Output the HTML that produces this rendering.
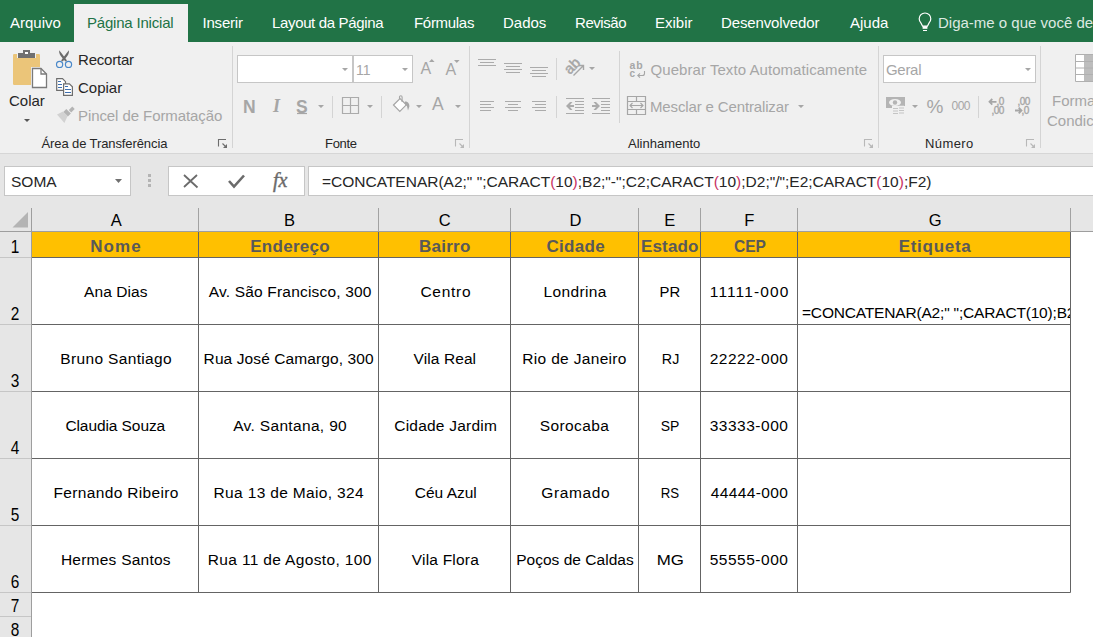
<!DOCTYPE html>
<html><head><meta charset="utf-8">
<style>
*{margin:0;padding:0;box-sizing:border-box}
html,body{width:1093px;height:637px;overflow:hidden;background:#fff;font-family:"Liberation Sans",sans-serif}
.a{position:absolute;white-space:nowrap}
#tabs{position:absolute;left:0;top:0;width:1093px;height:42px;background:#217346}
.tab{position:absolute;top:14px;font-size:15px;line-height:18px;color:#fff}
#rib{position:absolute;left:0;top:42px;width:1093px;height:112px;background:#f0f0f0;border-bottom:1px solid #d6d6d6}
.gl{position:absolute;top:136px;font-size:13px;line-height:16px;color:#262626}
.rt{position:absolute;font-size:15px;line-height:18px;color:#262626}
.dis{color:#a6a6a6}
#fb{position:absolute;left:0;top:154px;width:1093px;height:483px;background:#e6e6e6}
.box{position:absolute;background:#fff;border:1px solid #c6c6c6}
#ov{position:absolute;left:0;top:0}
.cl{position:absolute;font-size:15.5px;line-height:18px;color:#000;text-align:center;white-space:nowrap}
.hd{position:absolute;top:211px;padding-left:1px;font-size:16.5px;line-height:18px;color:#000;text-align:center}
.rn{position:absolute;left:0;width:30px;font-size:17.5px;transform:scaleX(0.88);line-height:18px;color:#000;text-align:center}
.bh{position:absolute;top:237.5px;font-size:17px;line-height:18px;color:#595959;font-weight:bold;text-align:center;white-space:nowrap}

</style></head><body>
<div id="tabs">
  <div class="a" style="left:74px;top:4px;width:114px;height:38px;background:#f0f0f0"></div>
  <div class="tab a" style="left:10px">Arquivo</div>
  <div class="tab a" style="left:87px;color:#217346;letter-spacing:-0.2px">Página Inicial</div>
  <div class="tab a" style="left:202.5px;letter-spacing:-0.2px">Inserir</div>
  <div class="tab a" style="left:272px;letter-spacing:-0.35px">Layout da Página</div>
  <div class="tab a" style="left:414px;letter-spacing:-0.3px">Fórmulas</div>
  <div class="tab a" style="left:503px">Dados</div>
  <div class="tab a" style="left:575px;letter-spacing:-0.45px">Revisão</div>
  <div class="tab a" style="left:655px">Exibir</div>
  <div class="tab a" style="left:721px;letter-spacing:-0.13px">Desenvolvedor</div>
  <div class="tab a" style="left:850px">Ajuda</div>
  <div class="tab a" style="left:938px;color:#dde9e1">Diga-me o que você deseja fazer</div>
</div>
<div id="rib"></div>
<!-- ribbon texts -->
<div class="rt a" style="left:9px;top:92px">Colar</div>
<div class="rt a" style="left:78px;top:51px;letter-spacing:-0.2px">Recortar</div>
<div class="rt a" style="left:78px;top:79px">Copiar</div>
<div class="rt a dis" style="left:78px;top:107px;letter-spacing:-0.08px">Pincel de Formatação</div>
<div class="gl a" style="left:41.5px;letter-spacing:-0.1px">Área de Transferência</div>
<div class="gl a" style="left:325px;letter-spacing:-0.3px">Fonte</div>
<div class="gl a" style="left:628px">Alinhamento</div>
<div class="gl a" style="left:925px;letter-spacing:0.4px">Número</div>
<div class="box" style="left:237px;top:55px;width:116px;height:28px"></div>
<div class="box" style="left:353px;top:55px;width:60px;height:28px"></div>
<div class="rt a dis" style="left:356px;top:61px;font-size:14px">11</div>
<div class="box" style="left:883px;top:55px;width:153px;height:28px"></div>
<div class="rt a dis" style="left:886px;top:61px;letter-spacing:-0.3px">Geral</div>
<div class="rt a dis" style="left:650.5px;top:61px;letter-spacing:0.06px">Quebrar Texto Automaticamente</div>
<div class="rt a dis" style="left:650px;top:97.5px;letter-spacing:-0.14px">Mesclar e Centralizar</div>
<div class="rt a dis" style="left:1052px;top:92px">Formatação</div>
<div class="rt a dis" style="left:1047px;top:112px">Condicional</div>
<div class="rt a dis" style="left:420.5px;top:60px;font-size:16px">A</div>
<div class="rt a dis" style="left:445.5px;top:61px;font-size:16px">A</div>
<div class="rt a dis" style="left:432px;top:94.5px;font-size:17.5px">A</div>
<div class="rt a dis" style="left:243px;top:97.5px;font-size:17.5px;font-weight:bold">N</div>
<div class="rt a dis" style="left:273px;top:97px;font-size:18px;font-style:italic;font-family:'Liberation Serif',serif;font-weight:bold">I</div>
<div class="rt a dis" style="left:296px;top:97.5px;font-size:17.5px;font-weight:bold">S</div>
<div class="rt a dis" style="left:926.5px;top:97.5px;font-size:19px">%</div>
<div class="rt a dis" style="left:951.5px;top:97px;font-size:12px;letter-spacing:-0.5px">000</div>

<div id="fb"></div>
<div class="box" style="left:4px;top:166px;width:127px;height:30px"></div>
<div class="rt a" style="left:11px;top:172.5px;color:#262626;font-size:15.5px">SOMA</div>
<div class="box" style="left:168px;top:166px;width:137px;height:30px"></div>
<div class="box" style="left:308px;top:166px;width:800px;height:30px"></div>
<div class="rt a" style="left:322px;top:172.5px;color:#262626;font-size:15.5px">=CONCATENAR(A2;" ";CARACT<span style="color:#c83264">(</span>10<span style="color:#c83264">)</span>;B2;"-";C2;CARACT<span style="color:#c83264">(</span>10<span style="color:#c83264">)</span>;D2;"/";E2;CARACT<span style="color:#c83264">(</span>10<span style="color:#c83264">)</span>;F2)</div>
<div class="a" style="left:32px;top:232px;width:1061px;height:405px;background:#fff"></div>
<div class="a" style="left:32px;top:232px;width:1038px;height:25px;background:#ffc000"></div>
<div class="hd a" style="left:31px;width:167px;letter-spacing:0.000px;text-indent:2.50px">A</div>
<div class="bh a" style="left:31px;width:167px;letter-spacing:1.100px;text-indent:3.00px">Nome</div>
<div class="hd a" style="left:198px;width:180px;letter-spacing:0.000px;text-indent:2.20px">B</div>
<div class="bh a" style="left:198px;width:180px;letter-spacing:0.300px;text-indent:4.20px">Endereço</div>
<div class="hd a" style="left:378px;width:132px;letter-spacing:0.000px;text-indent:0.60px">C</div>
<div class="bh a" style="left:378px;width:132px;letter-spacing:0.240px;text-indent:1.64px">Bairro</div>
<div class="hd a" style="left:510px;width:128px;letter-spacing:0.000px;text-indent:1.80px">D</div>
<div class="bh a" style="left:510px;width:128px;letter-spacing:0.320px;text-indent:3.52px">Cidade</div>
<div class="hd a" style="left:638px;width:62px;letter-spacing:0.000px;text-indent:0.40px">E</div>
<div class="bh a" style="left:638px;width:62px;letter-spacing:0.160px;text-indent:1.56px">Estado</div>
<div class="hd a" style="left:700px;width:97px;letter-spacing:0.000px;text-indent:0.80px">F</div>
<div class="bh a" style="left:700px;width:97px;transform:translateX(1.5px) scaleX(0.915)">CEP</div>
<div class="hd a" style="left:797px;width:273px;letter-spacing:0.000px;text-indent:2.20px">G</div>
<div class="bh a" style="left:797px;width:273px;letter-spacing:0.729px;text-indent:3.23px">Etiqueta</div>
<div class="cl a" style="left:32px;width:167px;top:282.5px;letter-spacing:0.086px;text-indent:0.69px">Ana Dias</div>
<div class="cl a" style="left:199px;width:180px;top:282.5px;letter-spacing:0.186px;text-indent:2.29px">Av. São Francisco, 300</div>
<div class="cl a" style="left:379px;width:132px;top:282.5px;letter-spacing:0.720px;text-indent:1.72px">Centro</div>
<div class="cl a" style="left:511px;width:128px;top:282.5px;letter-spacing:0.386px;text-indent:0.29px">Londrina</div>
<div class="cl a" style="left:639px;width:62px;top:282.5px;transform:translateX(-0.1px) scaleX(0.958)">PR</div>
<div class="cl a" style="left:701px;width:97px;top:282.5px;letter-spacing:1.125px;text-indent:0.33px">11111-000</div>
<div class="cl a" style="left:32px;width:167px;top:349.5px;letter-spacing:0.346px;text-indent:1.25px">Bruno Santiago</div>
<div class="cl a" style="left:199px;width:180px;top:349.5px;letter-spacing:0.100px;text-indent:-0.70px">Rua José Camargo, 300</div>
<div class="cl a" style="left:379px;width:132px;top:349.5px;letter-spacing:0.100px;text-indent:-0.30px">Vila Real</div>
<div class="cl a" style="left:511px;width:128px;top:349.5px;letter-spacing:0.323px;text-indent:-0.88px">Rio de Janeiro</div>
<div class="cl a" style="left:639px;width:62px;top:349.5px;transform:translateX(0.6px) scaleX(0.924)">RJ</div>
<div class="cl a" style="left:701px;width:97px;top:349.5px;letter-spacing:0.525px;text-indent:-0.88px">22222-000</div>
<div class="cl a" style="left:32px;width:167px;top:416.5px;letter-spacing:-0.083px;text-indent:-0.48px">Claudia Souza</div>
<div class="cl a" style="left:199px;width:180px;top:416.5px;letter-spacing:0.336px;text-indent:2.24px">Av. Santana, 90</div>
<div class="cl a" style="left:379px;width:132px;top:416.5px;letter-spacing:0.225px;text-indent:1.32px">Cidade Jardim</div>
<div class="cl a" style="left:511px;width:128px;top:416.5px;letter-spacing:0.386px;text-indent:-0.91px">Sorocaba</div>
<div class="cl a" style="left:639px;width:62px;top:416.5px;transform:scaleX(0.9)">SP</div>
<div class="cl a" style="left:701px;width:97px;top:416.5px;letter-spacing:0.525px;text-indent:-0.88px">33333-000</div>
<div class="cl a" style="left:32px;width:167px;top:483.5px;letter-spacing:0.340px;text-indent:1.24px">Fernando Ribeiro</div>
<div class="cl a" style="left:199px;width:180px;top:483.5px;letter-spacing:0.344px;text-indent:-0.46px">Rua 13 de Maio, 324</div>
<div class="cl a" style="left:379px;width:132px;top:483.5px;letter-spacing:0.000px;text-indent:1.60px">Céu Azul</div>
<div class="cl a" style="left:511px;width:128px;top:483.5px;letter-spacing:0.650px;text-indent:1.55px">Gramado</div>
<div class="cl a" style="left:639px;width:62px;top:483.5px;transform:scaleX(0.855)">RS</div>
<div class="cl a" style="left:701px;width:97px;top:483.5px;letter-spacing:0.400px;text-indent:-0.00px">44444-000</div>
<div class="cl a" style="left:32px;width:167px;top:550.5px;letter-spacing:0.242px;text-indent:0.74px">Hermes Santos</div>
<div class="cl a" style="left:199px;width:180px;top:550.5px;letter-spacing:0.345px;text-indent:1.45px">Rua 11 de Agosto, 100</div>
<div class="cl a" style="left:379px;width:132px;top:550.5px;letter-spacing:0.211px;text-indent:0.71px">Vila Flora</div>
<div class="cl a" style="left:511px;width:128px;top:550.5px;letter-spacing:0.021px;text-indent:-0.08px">Poços de Caldas</div>
<div class="cl a" style="left:639px;width:62px;top:550.5px;transform:translateX(0.3px) scaleX(1.09)">MG</div>
<div class="cl a" style="left:701px;width:97px;top:550.5px;letter-spacing:0.525px;text-indent:-0.88px">55555-000</div>
<div class="a" style="left:798px;top:232px;width:272px;height:92px;overflow:hidden"><div class="cl" style="left:4px;top:72.2px;text-align:left;letter-spacing:-0.18px">=CONCATENAR(A2;" ";CARACT(10);B2;"-";C2;CARACT(10);D2;"/";E2;CARACT(10);F2)</div></div>
<div class="rn a" style="top:238px">1</div>
<div class="rn a" style="top:305px">2</div>
<div class="rn a" style="top:372px">3</div>
<div class="rn a" style="top:439px">4</div>
<div class="rn a" style="top:506px">5</div>
<div class="rn a" style="top:573px">6</div>
<div class="rn a" style="top:597px">7</div>
<div class="rn a" style="top:621px">8</div>
<svg id="ov" width="1093" height="637" viewBox="0 0 1093 637">
 <g fill="none" stroke="#d4d4d4" stroke-width="1">
  <path d="M232.5 46V148M469.5 46V148M619.5 51V123M878.5 46V148M1040.5 46V148"/>
  <path d="M332.5 96V118M381.5 96V118M556.5 58V80M556.5 96V118M978.5 96V118"/>
 </g>
 <!-- clipboard -->
 <rect x="13" y="54" width="27" height="31" rx="1.2" fill="#ebc579"/>
 <path d="M17 52h19v6h-19z" fill="#f0f0f0"/>
 <path d="M18 53h17v5h-17z" fill="#707070"/>
 <path d="M23 50h7v4h-7z" fill="#707070"/>
 <path d="M25 52h3v2h-3z" fill="#fff"/>
 <path d="M31 67h17v22h-17z" fill="#f0f0f0"/>
 <path d="M32.5 68.5h8.5l5.5 5.5v13.5h-14z" fill="#fff" stroke="#7a7a7a" stroke-width="1.3"/>
 <path d="M41 68.5v5.5h5.5" fill="none" stroke="#7a7a7a" stroke-width="1.3"/>
 <path d="M24 119h6l-3 3z" fill="#555"/>
 <!-- scissors -->
 <path d="M59.2 50.2Q58.6 54 62.6 58.2L65.4 61.6L67 60.6L64.6 57.2Q61.5 53 59.2 50.2z" fill="#6b6b6b"/>
 <path d="M68.9 50.2Q69.5 54 65.5 58.2L62.7 61.6L61.1 60.6L63.5 57.2Q66.6 53 68.9 50.2z" fill="#6b6b6b"/>
 <circle cx="59.6" cy="64.4" r="3.1" fill="none" stroke="#4a88c9" stroke-width="1.2"/>
 <circle cx="68.5" cy="64.4" r="3.1" fill="none" stroke="#4a88c9" stroke-width="1.2"/>
 <!-- copy -->
 <path d="M56.7 78.7h5.8l3 3v8.6h-8.8z" fill="#fff" stroke="#6d6d6d" stroke-width="1.2"/>
 <path d="M63.6 83.8h5.8l3 3v8.6h-8.8z" fill="#fff" stroke="#6d6d6d" stroke-width="1.2"/>
 <path d="M58 81.5h3M58 84.5h4M58 87.5h4M65 86.5h3M65 89.5h6M65 92.5h6" stroke="#3d6fb0" stroke-width="1.1"/>
 <!-- painter -->
 <path d="M68.8 110l3.5-3.5 2.4 2.4-3.5 3.5z" fill="#b4b4b4"/>
 <path d="M63.3 112l3-3 4.6 4.6-3 3z" fill="#b4b4b4"/>
 <path d="M57 114.5l6-3 4.6 4.6-3.2 6.8z" fill="#d2d2d2"/>
 <!-- dropdown arrows -->
 <g fill="#a6a6a6">
  <path d="M342 68h6l-3 3z M402 68h6l-3 3z"/>
  <path d="M318 105h6l-3 3z M367 105h6l-3 3z M416 105h6l-3 3z M455 105h6l-3 3z"/>
  <path d="M589 67h6l-3 3z M912 105h6l-3 3z M1025 68h6l-3 3z M798 105h6l-3 3z"/>
  <path d="M429 62l2.8-3 2.8 3z M454 60h5.6l-2.8 3z"/>
 </g>
 <path d="M297 113.5h10" stroke="#a6a6a6" stroke-width="1.2"/>
 <!-- borders icon -->
 <path d="M342.5 97.5h16v16h-16zM350.5 97.5v16M342.5 105.5h16" fill="none" stroke="#ababab" stroke-width="1.2"/>
 <!-- bucket -->
 <path d="M393.5 105l6.5-6.5 6.3 6.3-6.5 6.5z" fill="#fff" stroke="#a6a6a6" stroke-width="1.2"/>
 <path d="M399.5 99v-2a1.3 1.3 0 0 1 2.6 0v5" fill="none" stroke="#a6a6a6" stroke-width="1.1"/>
 <path d="M405 101.5C407.8 101.3 409.6 103.5 409.4 106.5L408 110.5L407 106.2L404.8 104z" fill="#a6a6a6"/>
 <!-- alignment lines -->
 <g stroke="#ababab" stroke-width="1">
  <path d="M478 59.5h18M480 62.5h14M478 65.5h18"/>
  <path d="M504 63.5h18M506 66.5h14M504 69.5h18M506 72.5h14"/>
  <path d="M530 67.5h18M532 70.5h14M530 73.5h18M532 76.5h14"/>
  <path d="M480 101.5h14M480 104.5h11M480 107.5h14M480 110.5h11"/>
  <path d="M505 101.5h16M508 104.5h10M505 107.5h16M508 110.5h10"/>
  <path d="M532 101.5h14M535 104.5h11M532 107.5h14M535 110.5h11"/>
  <path d="M566 98.5h18M575 101.5h9M575 104.5h9M575 107.5h9M575 110.5h9M566 113.5h18"/>
  <path d="M592 98.5h18M601 101.5h9M601 104.5h9M601 107.5h9M601 110.5h9M592 113.5h18"/>
 </g>
 <path d="M566 106l4-4h2.5l-2.5 3h4v2h-4l2.5 3h-2.5z" fill="#ababab"/>
 <path d="M600 106l-4-4h-2.5l2.5 3h-4v2h4l-2.5 3h2.5z" fill="#ababab"/>
 <!-- orientation -->
 <text x="0" y="0" transform="translate(569.8 75) rotate(-45)" font-size="14.5" fill="#a6a6a6" stroke="#a6a6a6" stroke-width="0.5" font-family="Liberation Sans">ab</text>
 <path d="M573.5 75.5L583.5 65.5M579 65.5h4.5v4.5" fill="none" stroke="#a6a6a6" stroke-width="1.4"/>
 <!-- wrap icon -->
 <text x="629.5" y="68.5" font-size="10.5" font-weight="bold" fill="#a6a6a6" font-family="Liberation Sans" letter-spacing="0.8">ab</text>
 <text x="629.5" y="77" font-size="10" font-weight="bold" fill="#a6a6a6" font-family="Liberation Sans">c</text>
 <path d="M644.5 71v2.5a2 2 0 0 1 -2 2h-4.5M640 73.3l-2.2 2.2 2.2 2.2" fill="none" stroke="#a6a6a6" stroke-width="1.1"/>
 <!-- merge icon -->
 <path d="M627.5 96.5h18v18h-18zM627.5 101.5h18M627.5 109.5h18M636.5 96.5v5M636.5 109.5v5" fill="none" stroke="#a6a6a6" stroke-width="1.2"/>
 <path d="M630 105.5h13M632.5 103l-2.5 2.5 2.5 2.5M640.5 103l2.5 2.5-2.5 2.5" fill="none" stroke="#a6a6a6" stroke-width="1.1"/>
 <!-- currency -->
 <path d="M886 97h19v11h-19z" fill="#b4b4b4"/>
 <ellipse cx="895" cy="102.5" rx="6" ry="3.5" fill="#f0f0f0"/>
 <circle cx="895" cy="102.5" r="2.2" fill="#b4b4b4"/>
 <path d="M892 106h13v11h-13z" fill="#f0f0f0"/>
 <g fill="none" stroke="#c4c4c4" stroke-width="1"><path d="M893 108.5h5M893 111h5M893 113.5h5M899 105.5h5M899 108h5M899 110.5h5M899 113h5"/></g>
 <!-- decimal icons -->
 <text x="996.5" y="105" font-size="10" fill="#a6a6a6" font-family="Liberation Sans" letter-spacing="-0.6" stroke="#a6a6a6" stroke-width="0.35">,0</text>
 <text x="991.5" y="114" font-size="10" fill="#a6a6a6" font-family="Liberation Sans" letter-spacing="-0.6" stroke="#a6a6a6" stroke-width="0.35">,00</text>
 <path d="M989.5 101.8h7M992.3 99l-2.8 2.8 2.8 2.8" fill="none" stroke="#a6a6a6" stroke-width="1.8"/>
 <text x="1017.5" y="105" font-size="10" fill="#a6a6a6" font-family="Liberation Sans" letter-spacing="-0.6" stroke="#a6a6a6" stroke-width="0.35">,00</text>
 <text x="1021.5" y="114" font-size="10" fill="#a6a6a6" font-family="Liberation Sans" letter-spacing="-0.6" stroke="#a6a6a6" stroke-width="0.35">,0</text>
 <path d="M1015 110.5h6.5M1018.7 107.7l2.8 2.8-2.8 2.8" fill="none" stroke="#a6a6a6" stroke-width="1.8"/>
 <!-- cond format icon -->
 <path d="M1075.5 54.5h18v27h-18z" fill="#fff" stroke="#b0b0b0"/>
 <path d="M1084 55h9v26h-9z" fill="#bdbdbd"/>
 <path d="M1075.5 61.5h18M1075.5 68h18M1075.5 74.5h18" stroke="#b0b0b0"/>
 <!-- launchers -->
 <g fill="none" stroke="#6d6d6d" stroke-width="1.1"><path d="M218.5 146.5v-7h7.5M222.5 143.5l4 4"/></g>
 <path d="M227 144v4h-4z" fill="#6d6d6d"/>
 <g fill="none" stroke="#b8b8b8" stroke-width="1.1"><path d="M455.5 146.5v-7h7.5M459.5 143.5l4 4M864.5 146.5v-7h7.5M868.5 143.5l4 4M1026.5 146.5v-7h7.5M1030.5 143.5l4 4"/></g>
 <path d="M464 144v4h-4zM873 144v4h-4zM1035 144v4h-4z" fill="#b8b8b8"/>
 <!-- lightbulb -->
 <path d="M920.9 22.9A5.8 5.8 0 1 1 929.1 22.9L927.4 26.2H922.6Z" fill="none" stroke="#fff" stroke-width="1.2"/>
 <path d="M922.6 26.2h4.8v2.6h-4.8z" fill="#fff"/>
 <path d="M923 30.5h4" stroke="#fff" stroke-width="1"/>
<g stroke="#c6c6c6" stroke-width="1">
<path stroke="#a2a2a2" d="M198.5 208V231M378.5 208V231M510.5 208V231M638.5 208V231M700.5 208V231M797.5 208V231M1070.5 208V231"/>
<path d="M0 257.5H31M0 324.5H31M0 391.5H31M0 458.5H31M0 525.5H31M0 592.5H31M0 616.5H31"/>
</g>
<path d="M0 231.5H1093M31.5 208V637" stroke="#9e9e9e" stroke-width="1"/>
<g stroke="#646464" stroke-width="1">
<path d="M198.5 232V592.5M378.5 232V592.5M510.5 232V592.5M638.5 232V592.5M700.5 232V592.5M797.5 232V592.5M1070.5 232V592.5"/>
<path d="M32 257.5H1070.5M32 324.5H1070.5M32 391.5H1070.5M32 458.5H1070.5M32 525.5H1070.5M32 592.5H1070.5"/>
</g>
<path d="M12.5 227.5h15.5v-15.5z" fill="#b4b4b4"/>
<path d="M115 179h7l-3.5 4z" fill="#707070"/>
<path d="M148 174h3v3h-3zM148 179h3v3h-3zM148 184h3v3h-3z" fill="#b4b4b4"/>
<path d="M184 175l13.5 12.5M197 175l-13 12" stroke="#6b6b6b" stroke-width="1.8"/>
<path d="M229 181l5 5.5 10-11" fill="none" stroke="#6b6b6b" stroke-width="2.6"/>
<text x="273" y="187" font-family="Liberation Serif" font-style="italic" font-size="20" fill="#6b6b6b" stroke="#6b6b6b" stroke-width="0.4">fx</text>
</svg>
</body></html>
